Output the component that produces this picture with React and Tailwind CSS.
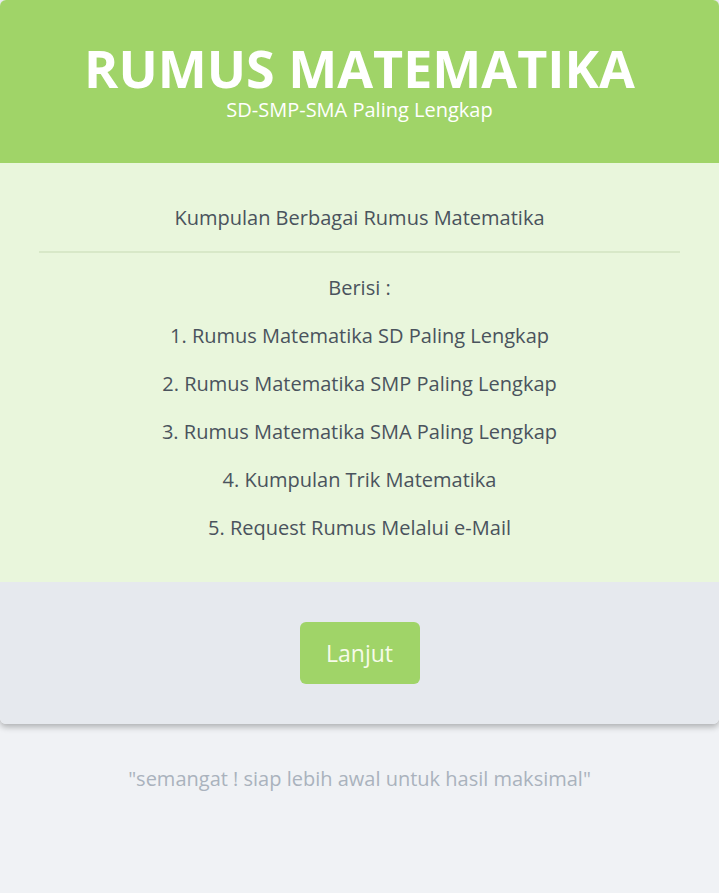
import React from 'react';

const items = [
  '1. Rumus Matematika SD Paling Lengkap',
  '2. Rumus Matematika SMP Paling Lengkap',
  '3. Rumus Matematika SMA Paling Lengkap',
  '4. Kumpulan Trik Matematika',
  '5. Request Rumus Melalui e-Mail',
];

export default function App() {
  return (
    <div className="min-h-[893px] bg-[#f0f2f5] font-['Open_Sans',sans-serif]">
      {/* Card */}
      <div className="overflow-hidden rounded-md shadow-[0_3px_6px_rgba(0,0,0,0.28)]">
        {/* Header */}
        <div className="flex h-[163px] flex-col items-center bg-[#a0d468] pt-[42px] text-white">
          <h1 className="text-[52px] font-bold leading-[52px]">RUMUS MATEMATIKA</h1>
          <p className="text-[20px] leading-[32px]">SD-SMP-SMA Paling Lengkap</p>
        </div>

        {/* Body */}
        <div className="bg-[#e9f6dc] px-[39px] pb-[39px] pt-[40px] text-center text-[20px] text-[#4a535d]">
          <p className="leading-[30px]">Kumpulan Berbagai Rumus Matematika</p>
          <hr className="mt-[18px] mb-[20px] border-t-2 border-[#d8e8c8]" />
          <p className="leading-[30px]">Berisi :</p>
          {items.map((item) => (
            <p key={item} className="mt-[18px] leading-[30px]">{item}</p>
          ))}
        </div>

        {/* Footer */}
        <div className="flex h-[142px] items-center justify-center bg-[#e6e9ee]">
          <button className="h-[62px] w-[120px] rounded-md bg-[#a0d468] text-[23px] text-[#f6fbe9]">
            Lanjut
          </button>
        </div>
      </div>

      <p className="mt-[40px] text-center text-[20px] text-[#aab2bd]">
        "semangat ! siap lebih awal untuk hasil maksimal"
      </p>
    </div>
  );
}
